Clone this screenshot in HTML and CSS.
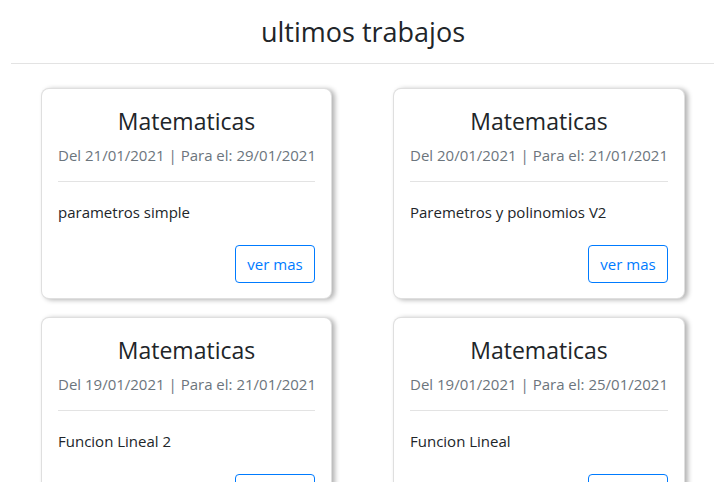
FILE: index.html
```html
<!DOCTYPE html>
<html lang="es">
<head>
<meta charset="utf-8">
<title>ultimos trabajos</title>
<link rel="stylesheet" href="styles.css">
</head>
<body>
<h3 class="page-title">ultimos trabajos</h3>
<hr class="page-rule">
<div class="grid">
  <div class="card">
    <h4 class="card-title">Matematicas</h4>
    <p class="card-subtitle">Del 21/01/2021 | Para el: 29/01/2021</p>
    <hr class="card-rule">
    <p class="card-text">parametros simple</p>
    <div class="actions"><button class="btn">ver mas</button></div>
  </div>
  <div class="card">
    <h4 class="card-title">Matematicas</h4>
    <p class="card-subtitle">Del 20/01/2021 | Para el: 21/01/2021</p>
    <hr class="card-rule">
    <p class="card-text">Paremetros y polinomios V2</p>
    <div class="actions"><button class="btn">ver mas</button></div>
  </div>
  <div class="card">
    <h4 class="card-title">Matematicas</h4>
    <p class="card-subtitle">Del 19/01/2021 | Para el: 21/01/2021</p>
    <hr class="card-rule">
    <p class="card-text">Funcion Lineal 2</p>
    <div class="actions"><button class="btn">ver mas</button></div>
  </div>
  <div class="card">
    <h4 class="card-title">Matematicas</h4>
    <p class="card-subtitle">Del 19/01/2021 | Para el: 25/01/2021</p>
    <hr class="card-rule">
    <p class="card-text">Funcion Lineal</p>
    <div class="actions"><button class="btn">ver mas</button></div>
  </div>
</div>
</body>
</html>
```
FILE: styles.css
```css
* { box-sizing: border-box; }
html, body { margin: 0; padding: 0; background: #fff; }
body {
  font-family: "Open Sans", "Noto Sans", sans-serif;
  color: #212529;
  font-size: 15px;
  overflow: hidden;
}
.page-title {
  margin: 15px 0 0;
  font-size: 27px;
  font-weight: 400;
  line-height: 34px;
  text-align: center;
}
.page-rule {
  margin: 14px 12px 0 11px;
  border: 0;
  border-top: 1px solid #e3e3e3;
}
.grid {
  display: grid;
  grid-template-columns: 291px 292px;
  column-gap: 61px;
  row-gap: 18px;
  padding: 24px 41px 0;
}
.card {
  border: 1px solid rgba(0,0,0,.125);
  border-radius: 8px;
  padding: 16px 16px 15px;
  background: #fff;
  box-shadow: 3px 1px 5px rgba(0,0,0,.3);
}
.card-title {
  margin: 0;
  font-size: 23px;
  font-weight: 400;
  line-height: 32px;
  text-align: center;
}
.card-subtitle {
  margin: 6px 0 0;
  font-size: 15px;
  line-height: 24px;
  color: #6c757d;
  text-align: center;
  white-space: nowrap;
}
.card-rule {
  margin: 14px 0 0;
  border: 0;
  border-top: 1px solid #e3e3e3;
}
.card-text {
  margin: 18px 0 0;
  font-size: 15px;
  line-height: 24px;
}
.actions {
  display: flex;
  justify-content: flex-end;
  margin-top: 21px;
}
.btn {
  font-family: inherit;
  font-size: 15px;
  line-height: 24px;
  padding: 0;
  width: 80px;
  height: 38px;
  white-space: nowrap;
  color: #007bff;
  background: #fff;
  border: 1px solid #007bff;
  border-radius: 4px;
}
```
